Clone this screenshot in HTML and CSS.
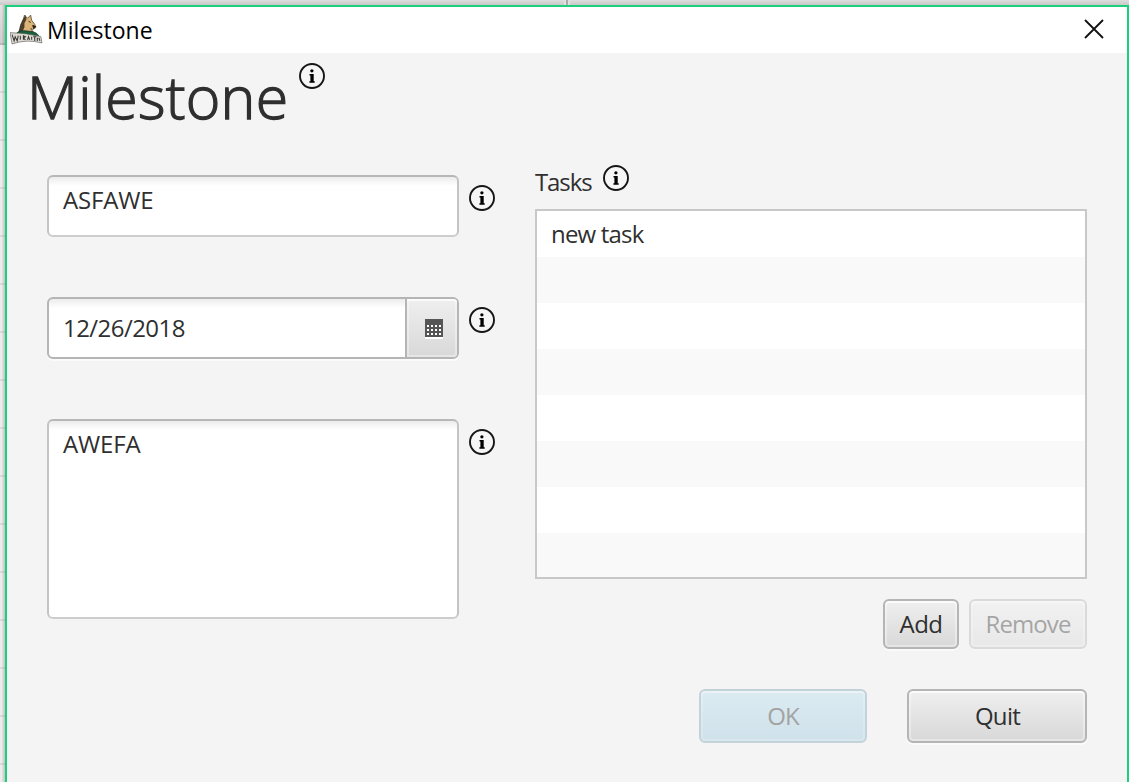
FILE: index.html
```html
<!DOCTYPE html>
<html lang="en">
<head>
<meta charset="utf-8">
<title>Milestone</title>
<link rel="stylesheet" href="styles.css">
</head>
<body>
<svg class="defs" width="0" height="0">
  <symbol id="info" viewBox="0 0 26 26">
    <circle cx="13" cy="13" r="12" fill="#f6f6f6" stroke="#161616" stroke-width="1.9"/>
    <circle cx="12.9" cy="7.8" r="1.65" fill="#000"/>
    <path d="M10.500 11h4.200v7.200h1v1.600h-5.300v-1.600h1v-5.600h-.9z" fill="#000"/>
  </symbol>
</svg>
<div class="desktop">
  <div class="behind-top"><span class="divider"></span></div>
  <div class="behind-left"></div>
  <div class="window">
    <header class="titlebar">
      <svg class="logo" viewBox="0 0 32 32">
        <path d="M12 19 13 13 12 9 13 7 14 3 17 6 20 3 21 8 24 12 25 15 22 17 20 16 23 20z" fill="#dcb477" stroke="#4a3c28" stroke-width=".7"/>
        <path d="M8 20 10 12 12 8 15 3 16 7 14 11 14 15 11 20z" fill="#4c402c"/>
        <path d="M18 9l2 1M22 13l3 1-2 2z" stroke="#231c14" fill="#231c14" stroke-width=".9"/>
        <path d="M5 22Q8 18 13 18L22 19Q26 20 28 23z" fill="#17613b" stroke="#222b22" stroke-width=".6"/>
        <path d="M0 20 Q15 20 30 24L31 30Q16 26 2 31z" fill="#dedbd2" stroke="#555" stroke-width=".6"/>
        <path d="M2 22l2 6 1-4 2 4 1-5M10 23v4M13 27v-4l2 1-2 1 2 2M17 27l1-3 1 3M21 24v3M22.500 24h3M24 24v4M26.500 25v3M28 25l1 3" fill="none" stroke="#353532" stroke-width="1"/>
      </svg>
      <span class="caption">Milestone</span>
      <svg class="close" viewBox="0 0 20 20"><path d="M1 1 19 19M19 1 1 19" stroke="#111" stroke-width="1.8" fill="none"/></svg>
    </header>
    <main class="content">
      <div class="heading"><h1>Milestone</h1><svg class="info"><use href="#info"/></svg></div>
      <div class="columns">
        <section class="fields">
          <div class="field"><div class="input name"><span>ASFAWE</span></div><svg class="info"><use href="#info"/></svg></div>
          <div class="field">
            <div class="picker"><div class="date"><span>12/26/2018</span></div>
              <div class="calendar"><svg width="18" height="20" viewBox="0 0 18 20" shape-rendering="crispEdges"><path d="M0 2h18v18H0z" fill="#fff"/><path d="M0 0h18v18H0z" fill="#555"/><path d="M2 7h14M2 11h14M2 15h14" stroke="#fff" stroke-width="2" stroke-dasharray="2 2"/></svg></div>
            </div><svg class="info"><use href="#info"/></svg>
          </div>
          <div class="field"><div class="input notes"><span>AWEFA</span></div><svg class="info"><use href="#info"/></svg></div>
        </section>
        <section class="tasks">
          <div class="tasks-label"><span>Tasks</span><svg class="info"><use href="#info"/></svg></div>
          <div class="list"><div class="row"><span>new task</span></div><div class="row"></div><div class="row"></div><div class="row"></div><div class="row"></div><div class="row"></div><div class="row"></div><div class="row"></div></div>
          <div class="actions"><div class="btn add"><span>Add</span></div><div class="btn remove disabled"><span>Remove</span></div></div>
        </section>
      </div>
      <footer class="footer"><div class="btn ok"><span>OK</span></div><div class="btn quit"><span>Quit</span></div></footer>
    </main>
  </div>
</div>
</body>
</html>
```
FILE: styles.css
```css
* { box-sizing: border-box; }
body { margin: 0; overflow: hidden; font: 24px/32px "Open Sans", "Noto Sans", sans-serif; color: #2f2f2f; }
.defs { position: absolute; }
.desktop { display: grid; grid-template: 5px 777px / 5px 1124px; width: 1129px; height: 782px; overflow: hidden; background: #d8d8d8; }
.behind-top { grid-column: 1 / 3; background: linear-gradient(#dedede, #c9c9c9); }
.divider { display: block; width: 6px; height: 5px; margin-left: 564px; border: solid #e0e0e0; border-width: 0 2px; background: #a9a9a9; }
.behind-left { background: linear-gradient(90deg, transparent 30%, rgba(0,0,0,.18)), linear-gradient(#e2e2e2, #cfcfcf 38px, #b9b9b9 38px) 0 0 / 100% 40px no-repeat, repeating-linear-gradient(#ececec 0 46px, #d9d9d9 46px 48px) 0 40px; }
.window { border: 2px solid #1bcf7b; border-bottom: 0; background: #f4f4f4; }
.titlebar { display: flex; height: 46px; padding-left: 3px; background: #fff; color: #000; }
.logo { width: 33px; height: 33px; margin-top: 5px; }
.caption { margin: 7px 0 0 4px; font-size: 23px; letter-spacing: .05px; flex: 1; }
.close { width: 20px; height: 20px; margin: 12px 23px 0 0; }
.content { padding: 10px 40px 0; }
.heading { display: flex; height: 102px; margin-left: -20px; }
h1 { width: 272px; margin: 0; font-size: 59px; font-weight: 300; line-height: 67px; letter-spacing: .25px; -webkit-text-stroke: 1.3px #2f2f2f; white-space: nowrap; }
.info { display: block; width: 26px; height: 26px; flex: none; }
.columns { display: flex; gap: 40px; height: 484px; }
.fields { display: flex; flex-direction: column; gap: 60px; width: 448px; padding-top: 10px; }
.field { display: flex; gap: 10px; }
.field .info { margin-top: 10px; }
.input, .picker { width: 412px; border: 2px solid #b5b5b5; border-radius: 6px; background: linear-gradient(#ececec, #fff 9px); }
.input { padding: 7px 14px; border-color: #b7b7b7 #c4c4c4 #cdcdcd; letter-spacing: -.15px; }
.name { height: 62px; }
.notes { height: 200px; }
.picker { display: flex; height: 62px; box-shadow: 0 2px #fbfbfb; }
.date { flex: 1; padding: 13px 14px; letter-spacing: -.55px; }
.calendar, .btn { display: flex; align-items: center; justify-content: center; background: linear-gradient(#efefef, #d8d8d8); box-shadow: inset 0 0 0 2px rgba(255,255,255,.35), inset 0 2px rgba(255,255,255,.6); }
.calendar { width: 52px; border-left: 2px solid #b5b5b5; border-radius: 0 4px 4px 0; padding: 2px 0 0 4px; }
.tasks { width: 552px; }
.tasks-label { display: flex; height: 44px; }
.tasks-label span { width: 68px; padding-top: 1px; letter-spacing: -1.1px; }
.list { height: 370px; border: 2px solid #c8c8c8; overflow: hidden; background: #fff; }
.row { height: 46px; padding: 7px 14px; letter-spacing: -.8px; }
.row:nth-child(even) { background: #f9f9f9; }
.actions { display: flex; justify-content: flex-end; gap: 10px; margin-top: 20px; }
.btn { height: 50px; border: 2px solid #b5b5b5; border-radius: 6px; box-shadow: inset 0 0 0 2px rgba(255,255,255,.35), inset 0 2px rgba(255,255,255,.6), 0 2px #fafafa; }
.add { width: 76px; letter-spacing: -.5px; }
.remove { width: 118px; letter-spacing: -.9px; }
.disabled { opacity: .4; }
.footer { display: flex; justify-content: flex-end; gap: 40px; margin-top: 40px; }
.footer .btn { height: 54px; }
.ok { width: 168px; letter-spacing: -1px; color: #a3a3a3; border-color: #c4d3da; background: linear-gradient(#dbebf2, #cfe1ea); box-shadow: inset 0 0 0 2px rgba(255,255,255,.2), inset 0 2px rgba(255,255,255,.3); }
.quit { width: 180px; padding-left: 1px; letter-spacing: -.7px; }
```
